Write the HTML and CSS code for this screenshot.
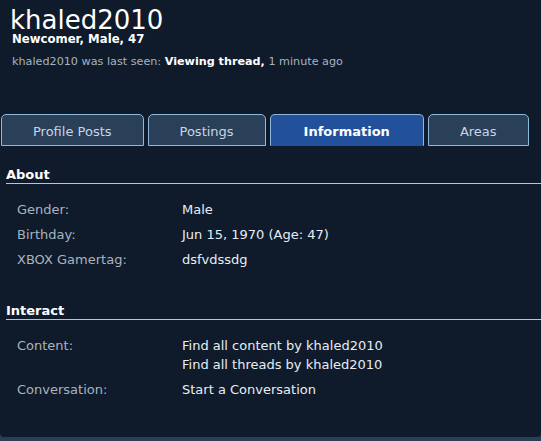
FILE: index.html
```html
<!DOCTYPE html>
<html lang="en">
<head>
<meta charset="utf-8">
<title>khaled2010</title>
<link rel="stylesheet" href="styles.css">
</head>
<body>
<div class="panel">
  <header class="profile-head">
    <h1 class="username">khaled2010</h1>
    <div class="user-blurb">Newcomer, Male, 47</div>
    <div class="last-seen">khaled2010 was last seen: <strong>Viewing thread,</strong> 1 minute ago</div>
  </header>

  <ul class="tabs">
    <li class="tab">Profile Posts</li>
    <li class="tab">Postings</li>
    <li class="tab tab-active">Information</li>
    <li class="tab">Areas</li>
  </ul>

  <section class="info-block">
    <h3 class="block-head">About</h3>
    <dl class="pairs">
      <div class="pair"><dt>Gender:</dt><dd>Male</dd></div>
      <div class="pair"><dt>Birthday:</dt><dd>Jun 15, 1970 (Age: 47)</dd></div>
      <div class="pair"><dt>XBOX Gamertag:</dt><dd>dsfvdssdg</dd></div>
    </dl>
  </section>

  <section class="info-block info-block-second">
    <h3 class="block-head">Interact</h3>
    <dl class="pairs">
      <div class="pair"><dt>Content:</dt><dd><div>Find all content by khaled2010</div><div>Find all threads by khaled2010</div></dd></div>
      <div class="pair"><dt>Conversation:</dt><dd>Start a Conversation</dd></div>
    </dl>
  </section>
</div>
</body>
</html>
```

FILE: styles.css
```css
* { box-sizing: border-box; }

html, body {
  margin: 0;
  padding: 0;
  background: #2b3e56;
  font-family: "DejaVu Sans", Verdana, sans-serif;
  color: #e6edf5;
}

.panel {
  background: #0f1b2b;
  min-height: 437px;
  border-radius: 0 0 4px 4px;
  overflow: hidden;
}

.profile-head {
  padding: 7px 0 0 12px;
}

.username {
  margin: 0 0 0 -2px;
  font-size: 26px;
  line-height: 26px;
  font-weight: normal;
  color: #ffffff;
}

.user-blurb {
  font-size: 11.7px;
  line-height: 12px;
  font-weight: bold;
  color: #ffffff;
}

.last-seen {
  margin-top: 9px;
  font-size: 11.2px;
  line-height: 16px;
  color: #a9b3be;
}

.last-seen strong {
  color: #ffffff;
}

.tabs {
  list-style: none;
  margin: 44px 0 0 1px;
  padding: 0;
  display: flex;
  gap: 4px;
}

.tab {
  padding: 3px 31px 0;
  line-height: 27px;
  font-size: 13px;
  color: #c7d6e6;
  background: #2a3f58;
  border: 1px solid #8db9dc;
  border-radius: 5px 5px 0 0;
  white-space: nowrap;
}

.tab-active {
  padding: 3px 33px 0;
  background: #23509a;
  border-color: #8db9dc;
  border-bottom-color: #23509a;
  color: #ffffff;
  font-weight: bold;
}

.info-block {
  margin-top: 21px;
}

.info-block-second {
  margin-top: 34px;
}

.block-head {
  margin: 0 0 0 6px;
  font-size: 13px;
  line-height: 16px;
  font-weight: bold;
  color: #ffffff;
  border-bottom: 1px solid #b3c7db;
}

.pairs {
  margin: 16px 0 0;
  padding: 0;
  display: flex;
  flex-direction: column;
  gap: 6px;
}

.pair {
  display: grid;
  grid-template-columns: 165px 1fr;
  padding-left: 17px;
  font-size: 13px;
  line-height: 19px;
}

.pair dt {
  color: #a9b3be;
}

.pair dd {
  margin: 0;
  color: #e6edf5;
}
```
